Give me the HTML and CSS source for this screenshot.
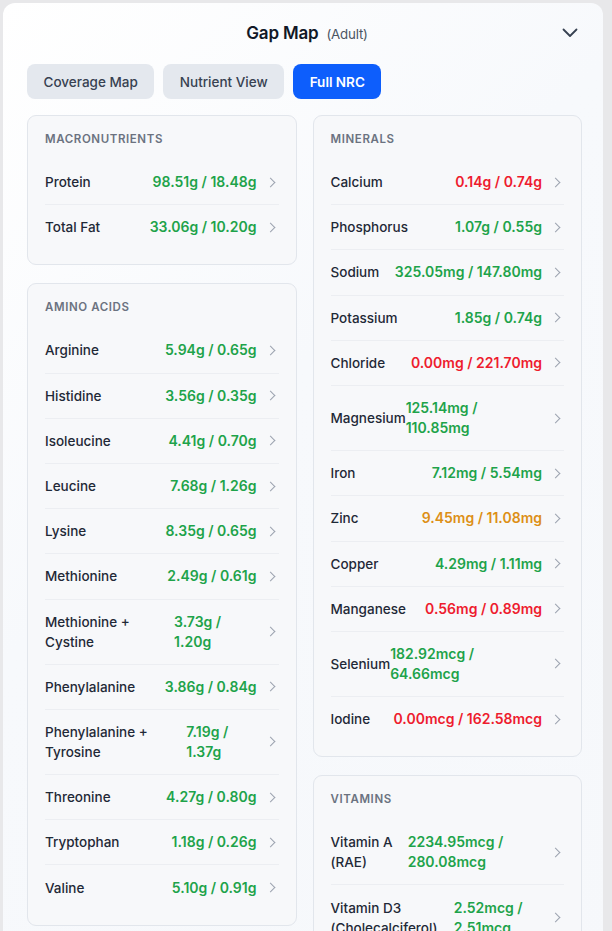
FILE: index.html
```html
<!DOCTYPE html>
<html>
  <head>
    <title>Gap Map</title>
    <link rel="stylesheet" href="styles.css">
  </head>
  <body>
    <div class="panel">
      <div class="panel-head">
        <h2 class="title">Gap Map <span class="title-sub">(Adult)</span></h2>
        <button class="toggle" type="button" aria-label="Collapse">
          <svg width="16" height="10" viewBox="0 0 16 10" fill="none">
            <path d="M1.5 1.5L8 8l6.5-6.5" stroke="#374151" stroke-width="1.8" stroke-linecap="round" stroke-linejoin="round"/>
          </svg>
        </button>
      </div>

      <div class="tabs">
        <button class="tab" type="button">Coverage Map</button>
        <button class="tab" type="button">Nutrient View</button>
        <button class="tab active" type="button">Full NRC</button>
      </div>

      <div class="columns">
        <div class="column">
          <section class="card">
            <h3 class="card-title">Macronutrients</h3>
            <div class="row"><span class="name">Protein</span><span class="value ok">98.51g / 18.48g</span><span class="chev"></span></div>
            <div class="row"><span class="name">Total Fat</span><span class="value ok">33.06g / 10.20g</span><span class="chev"></span></div>
          </section>

          <section class="card">
            <h3 class="card-title">Amino Acids</h3>
            <div class="row"><span class="name">Arginine</span><span class="value ok">5.94g / 0.65g</span><span class="chev"></span></div>
            <div class="row"><span class="name">Histidine</span><span class="value ok">3.56g / 0.35g</span><span class="chev"></span></div>
            <div class="row"><span class="name">Isoleucine</span><span class="value ok">4.41g / 0.70g</span><span class="chev"></span></div>
            <div class="row"><span class="name">Leucine</span><span class="value ok">7.68g / 1.26g</span><span class="chev"></span></div>
            <div class="row"><span class="name">Lysine</span><span class="value ok">8.35g / 0.65g</span><span class="chev"></span></div>
            <div class="row"><span class="name">Methionine</span><span class="value ok">2.49g / 0.61g</span><span class="chev"></span></div>
            <div class="row"><span class="name">Methionine + Cystine</span><span class="value ok">3.73g / 1.20g</span><span class="chev"></span></div>
            <div class="row"><span class="name">Phenylalanine</span><span class="value ok">3.86g / 0.84g</span><span class="chev"></span></div>
            <div class="row"><span class="name">Phenylalanine + Tyrosine</span><span class="value ok">7.19g / 1.37g</span><span class="chev"></span></div>
            <div class="row"><span class="name">Threonine</span><span class="value ok">4.27g / 0.80g</span><span class="chev"></span></div>
            <div class="row"><span class="name">Tryptophan</span><span class="value ok">1.18g / 0.26g</span><span class="chev"></span></div>
            <div class="row"><span class="name">Valine</span><span class="value ok">5.10g / 0.91g</span><span class="chev"></span></div>
          </section>
        </div>

        <div class="column">
          <section class="card">
            <h3 class="card-title">Minerals</h3>
            <div class="row"><span class="name">Calcium</span><span class="value low">0.14g / 0.74g</span><span class="chev"></span></div>
            <div class="row"><span class="name">Phosphorus</span><span class="value ok">1.07g / 0.55g</span><span class="chev"></span></div>
            <div class="row"><span class="name">Sodium</span><span class="value ok">325.05mg / 147.80mg</span><span class="chev"></span></div>
            <div class="row"><span class="name">Potassium</span><span class="value ok">1.85g / 0.74g</span><span class="chev"></span></div>
            <div class="row"><span class="name">Chloride</span><span class="value low">0.00mg / 221.70mg</span><span class="chev"></span></div>
            <div class="row"><span class="name">Magnesium</span><span class="value ok">125.14mg / 110.85mg</span><span class="chev"></span></div>
            <div class="row"><span class="name">Iron</span><span class="value ok">7.12mg / 5.54mg</span><span class="chev"></span></div>
            <div class="row"><span class="name">Zinc</span><span class="value warn">9.45mg / 11.08mg</span><span class="chev"></span></div>
            <div class="row"><span class="name">Copper</span><span class="value ok">4.29mg / 1.11mg</span><span class="chev"></span></div>
            <div class="row"><span class="name">Manganese</span><span class="value low">0.56mg / 0.89mg</span><span class="chev"></span></div>
            <div class="row"><span class="name">Selenium</span><span class="value ok">182.92mcg / 64.66mcg</span><span class="chev"></span></div>
            <div class="row"><span class="name">Iodine</span><span class="value low">0.00mcg / 162.58mcg</span><span class="chev"></span></div>
          </section>

          <section class="card">
            <h3 class="card-title">Vitamins</h3>
            <div class="row"><span class="name">Vitamin A (RAE)</span><span class="value ok">2234.95mcg / 280.08mcg</span><span class="chev"></span></div>
            <div class="row"><span class="name">Vitamin D3 (Cholecalciferol)</span><span class="value ok">2.52mcg / 2.51mcg</span><span class="chev"></span></div>
          </section>
        </div>
      </div>
    </div>
  </body>
</html>
```

FILE: styles.css
```css
body {
  margin: 0;
  padding: 3px 9px 0 3px;
  font-family: Inter, "Noto Sans", sans-serif;
  background-color: #e8e8ea;
  color: #1f2937;
}

.panel {
  background: linear-gradient(135deg, #ffffff 0%, #f7f9fc 40%, #f6f8fb 100%);
  border-radius: 12px;
  padding: 18px 21px 24px 24px;
  min-height: 1000px;
}

.panel-head {
  display: grid;
  grid-template-columns: 1fr auto 1fr;
  align-items: center;
  padding: 0 4px 0 9px;
  height: 24px;
}

.title {
  grid-column: 2;
  margin: 0;
  font-size: 17px;
  font-weight: 600;
  color: #111827;
  letter-spacing: -0.2px;
}

.title-sub {
  margin-left: 4px;
  font-size: 13.3px;
  font-weight: 400;
  color: #4b5563;
}

.toggle {
  grid-column: 3;
  justify-self: end;
  border: none;
  background: none;
  padding: 0;
  display: flex;
  cursor: pointer;
}

.tabs {
  display: flex;
  gap: 9px;
  margin-top: 19px;
  margin-bottom: 16px;
}

.tab {
  height: 35px;
  padding: 0 16.5px;
  border: none;
  border-radius: 8px;
  background-color: #e4e8ee;
  color: #374151;
  font-family: inherit;
  font-size: 13.5px;
  font-weight: 500;
  cursor: pointer;
}

.tab.active {
  background-color: #0d5efc;
  color: #fff;
  font-weight: 600;
}

.columns {
  display: grid;
  grid-template-columns: 1fr 1fr;
  gap: 16px;
  align-items: start;
}

.column {
  display: flex;
  flex-direction: column;
  gap: 18px;
}

.card {
  background-color: #f7f8fa;
  border: 1px solid #e2e6ec;
  border-radius: 9px;
  padding: 15px 17px 15px 17px;
}

.card-title {
  margin: 0 0 13px;
  font-size: 11.5px;
  line-height: 16px;
  font-weight: 600;
  letter-spacing: 0.6px;
  text-transform: uppercase;
  color: #6b7280;
}

.row {
  display: flex;
  align-items: center;
  padding: 12.1px 0;
  font-size: 13.5px;
  line-height: 20px;
  border-bottom: 1px solid #eceef2;
}

.row:last-child {
  border-bottom: none;
}

.name {
  font-weight: 500;
  color: #1f2937;
}

.value {
  margin-left: auto;
  font-size: 14px;
  font-weight: 600;
}

.ok {
  color: #1ea34a;
}

.low {
  color: #ee1c2e;
}

.warn {
  color: #dd8f16;
}

.chev {
  flex: none;
  width: 14px;
  height: 14px;
  margin-left: 8px;
  display: flex;
  align-items: center;
  justify-content: center;
}

.chev::after {
  content: "";
  width: 6px;
  height: 6px;
  margin-left: -3px;
  border-top: 1.5px solid #9ca3af;
  border-right: 1.5px solid #9ca3af;
  transform: rotate(45deg);
}
```
